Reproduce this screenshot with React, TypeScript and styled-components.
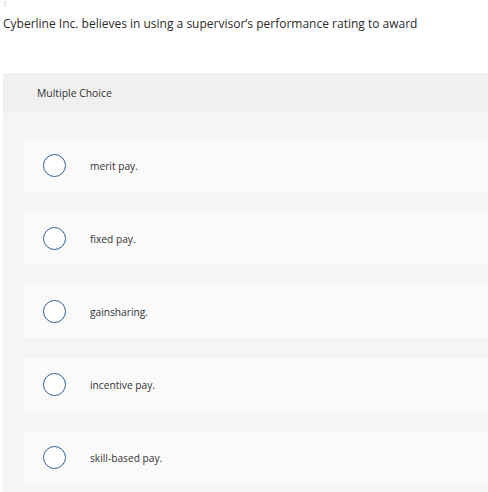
import styled, { createGlobalStyle } from 'styled-components'

const GlobalStyle = createGlobalStyle`
  html, body {
    margin: 0;
    padding: 0;
    background: #ffffff;
    font-family: "Open Sans", "Liberation Sans", Arial, sans-serif;
  }
`

const Page = styled.div({
  width: '488px',
  height: '492px',
  overflow: 'hidden',
  padding: '0 0 0 3px',
  boxSizing: 'border-box',
  display: 'flex',
  flexDirection: 'column'
})

const Marker = styled.div({
  height: '8px',
  paddingLeft: '1px',
  fontSize: '7px',
  lineHeight: '8px',
  color: '#5a7fa8'
})

const Question = styled.p({
  margin: '9px 0 0 0',
  fontSize: '12px',
  lineHeight: '14px',
  color: '#2b2b2b'
})

const Panel = styled.div({
  marginTop: '42px',
  flex: 1,
  background: '#f5f5f5',
  display: 'flex',
  flexDirection: 'column'
})

const PanelHeader = styled.div({
  height: '40px',
  background: '#f0f0f0',
  display: 'flex',
  alignItems: 'center',
  paddingLeft: '34px',
  fontSize: '10.4px',
  color: '#333333'
})

const OptionList = styled.div({
  padding: '26px 0 0 21px',
  display: 'flex',
  flexDirection: 'column',
  gap: '20px'
})

const Option = styled.label({
  height: '53px',
  background: '#fafafa',
  display: 'flex',
  alignItems: 'center',
  paddingLeft: '19px',
  cursor: 'pointer'
})

const Radio = styled.span({
  width: '21px',
  height: '21px',
  borderRadius: '50%',
  border: '1.5px solid #2f5f91',
  background: '#ffffff',
  flexShrink: 0
})

const OptionText = styled.span({
  marginLeft: '24px',
  fontSize: '10.2px',
  color: '#333333'
})

const choices = ['merit pay.', 'fixed pay.', 'gainsharing.', 'incentive pay.', 'skill-based pay.']

export default function App() {
  return (<Page>
    <GlobalStyle />
    <Marker>⁝</Marker>
    <Question>Cyberline Inc. believes in using a supervisor’s performance rating to award</Question>
    <Panel>
      <PanelHeader>Multiple Choice</PanelHeader>
      <OptionList>
        {choices.map(c => (<Option key={c}>
          <Radio />
          <OptionText>{c}</OptionText>
        </Option>))}
      </OptionList>
    </Panel>
  </Page>)
}
